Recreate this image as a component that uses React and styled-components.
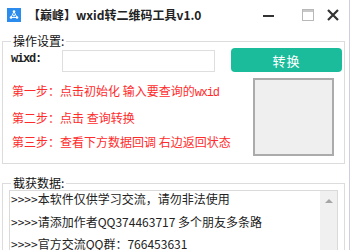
import React, { useState } from 'react';
import styled, { createGlobalStyle } from 'styled-components';

const Global = createGlobalStyle`
  html, body { margin: 0; padding: 0; background: #fff; }
  body { font-family: "Noto Sans CJK SC", "Noto Sans", sans-serif; }
  * { box-sizing: border-box; }
`;

const Window = styled.div`
  width: 350px;
  height: 250px;
  overflow: hidden;
  background: #fff;
  border-right: 1px solid #cfcde0;
  display: flex;
  flex-direction: column;
`;

const TitleBar = styled.div`
  height: 30px;
  flex: none;
  display: flex;
  align-items: center;
  padding-left: 7px;
`;

const TitleText = styled.div`
  margin-left: 7px;
  font-size: 12px;
  font-weight: bold;
  color: #222;
  flex: 1;
  line-height: 16px;
  padding-bottom: 1px;
`;

const Controls = styled.div`
  display: flex;
  align-items: center;
  gap: 13px;
  padding-right: 10px;
  padding-bottom: 1px;
`;

const Group = styled.fieldset`
  margin: ${p => p.$top}px 0 0 2px;
  width: 343px;
  border: 1px solid #dcdcdc;
  padding: 0 0 ${p => p.$bottom}px 8px;
  min-width: 0;
  flex: none;
`;

const Legend = styled.legend`
  font-size: 12px;
  line-height: 14px;
  color: #111;
  padding: 0 2px;
  margin-left: 0;
`;

const InputRow = styled.div`
  display: flex;
  align-items: center;
  height: 24px;
`;

const Label = styled.span`
  width: 51px;
  font-family: "Liberation Mono", monospace;
  font-weight: bold;
  font-size: 12px;
  letter-spacing: -1.2px;
  color: #222;
  padding-bottom: 2px;
`;

const Input = styled.input`
  width: 153px;
  height: 22px;
  margin-top: 2px;
  border: 1px solid #dedede;
  outline: none;
  padding: 0 4px;
  font-size: 12px;
`;

const Button = styled.button`
  margin-left: 16px;
  width: 111px;
  height: 24px;
  border: none;
  border-radius: 4px;
  background: #1abc9c;
  color: #fff;
  font-family: "Noto Sans CJK SC", sans-serif;
  font-size: 13px;
  letter-spacing: 1px;
  padding: 0;
  cursor: pointer;
`;

const Lower = styled.div`
  display: flex;
  margin-top: 6px;
`;

const Steps = styled.div`
  flex: 1;
  padding-top: 1px;
  padding-left: 1px;
`;

const Step = styled.div`
  color: #ff2b2b;
  font-size: 12px;
  line-height: 24.5px;
  white-space: nowrap;
`;

const Latin = styled.span`
  font-family: "Liberation Mono", monospace;
  letter-spacing: -1.2px;
`;

const StatusBox = styled.div`
  width: 81px;
  height: 78px;
  margin-right: 10px;
  background: #efefef;
  border: 2px solid #ababab;
`;

const List = styled.div`
  margin-left: -2px;
  width: 329px;
  height: 70px;
  border: 1px solid #dadada;
  display: flex;
`;

const Lines = styled.div`
  flex: 1;
  padding-left: 1px;
`;

const Line = styled.div`
  height: 16px;
  line-height: 16px;
  margin-bottom: 6.5px;
  font-size: 12px;
  color: #222;
  white-space: nowrap;
`;

const Scroll = styled.div`
  width: 17px;
  background: #f0f0f0;
  display: flex;
  justify-content: center;
  padding-top: 7px;
`;

const Logo = () => (
  <svg width="14" height="14" viewBox="0 0 14 14">
    <rect width="14" height="14" fill="#2b8cee" />
    <g stroke="#fff" strokeWidth="0.9" fill="none">
      <line x1="7" y1="3.5" x2="4" y2="9.5" />
      <line x1="7" y1="3.5" x2="10" y2="9.5" />
      <line x1="4" y1="9.5" x2="10" y2="9.5" />
    </g>
    <g fill="#fff">
      <circle cx="7" cy="3.5" r="1.3" />
      <circle cx="4" cy="9.5" r="1.3" />
      <circle cx="10" cy="9.5" r="1.3" />
      <circle cx="7" cy="7.5" r="0.9" />
    </g>
  </svg>
);

const MinIcon = () => (
  <svg width="11" height="12" viewBox="0 0 11 12">
    <rect x="0" y="6" width="11" height="2" fill="#333" />
  </svg>
);

const MaxIcon = () => (
  <svg width="12" height="12" viewBox="0 0 12 12">
    <rect x="0.5" y="0.5" width="11" height="11" fill="none" stroke="#b8b8b8" />
    <rect x="1" y="1" width="10" height="2" fill="#c8c8c8" />
  </svg>
);

const CloseIcon = () => (
  <svg width="12" height="12" viewBox="0 0 12 12">
    <path d="M1 1 L11 11 M11 1 L1 11" stroke="#333" strokeWidth="2.2" />
  </svg>
);

const UpArrow = () => (
  <svg width="8" height="5" viewBox="0 0 8 5">
    <path d="M0 5 L4 1 L8 5 Z" fill="#a6a6a6" />
  </svg>
);

const App = () => {
  const [wxid, setWxid] = useState('');

  const logs = [
    '>>>>本软件仅供学习交流，请勿非法使用',
    '>>>>请添加作者QQ374463717 多个朋友多条路',
    '>>>>官方交流QQ群：766453631',
  ];

  return (
    <Window>
      <Global />
      <TitleBar>
        <Logo />
        <TitleText>【巅峰】wxid转二维码工具v1.0</TitleText>
        <Controls>
          <MinIcon />
          <span style={{ width: 2 }} />
          <MaxIcon />
          <CloseIcon />
        </Controls>
      </TitleBar>

      <Group $top={4} $bottom={7}>
        <Legend>操作设置:</Legend>
        <InputRow>
          <Label>wixd:</Label>
          <Input value={wxid} onChange={e => setWxid(e.target.value)} />
          <Button>转换</Button>
        </InputRow>
        <Lower>
          <Steps>
            <Step>第一步：点击初始化 输入要查询的<Latin>wxid</Latin></Step>
            <Step>第二步：点击 查询转换</Step>
            <Step>第三步：查看下方数据回调 右边返回状态</Step>
          </Steps>
          <StatusBox />
        </Lower>
      </Group>

      <Group $top={12} $bottom={0}>
        <Legend>截获数据:</Legend>
        <List>
          <Lines>
            {logs.map(l => <Line key={l}>{l}</Line>)}
          </Lines>
          <Scroll><UpArrow /></Scroll>
        </List>
      </Group>
    </Window>
  );
};

export default App;
